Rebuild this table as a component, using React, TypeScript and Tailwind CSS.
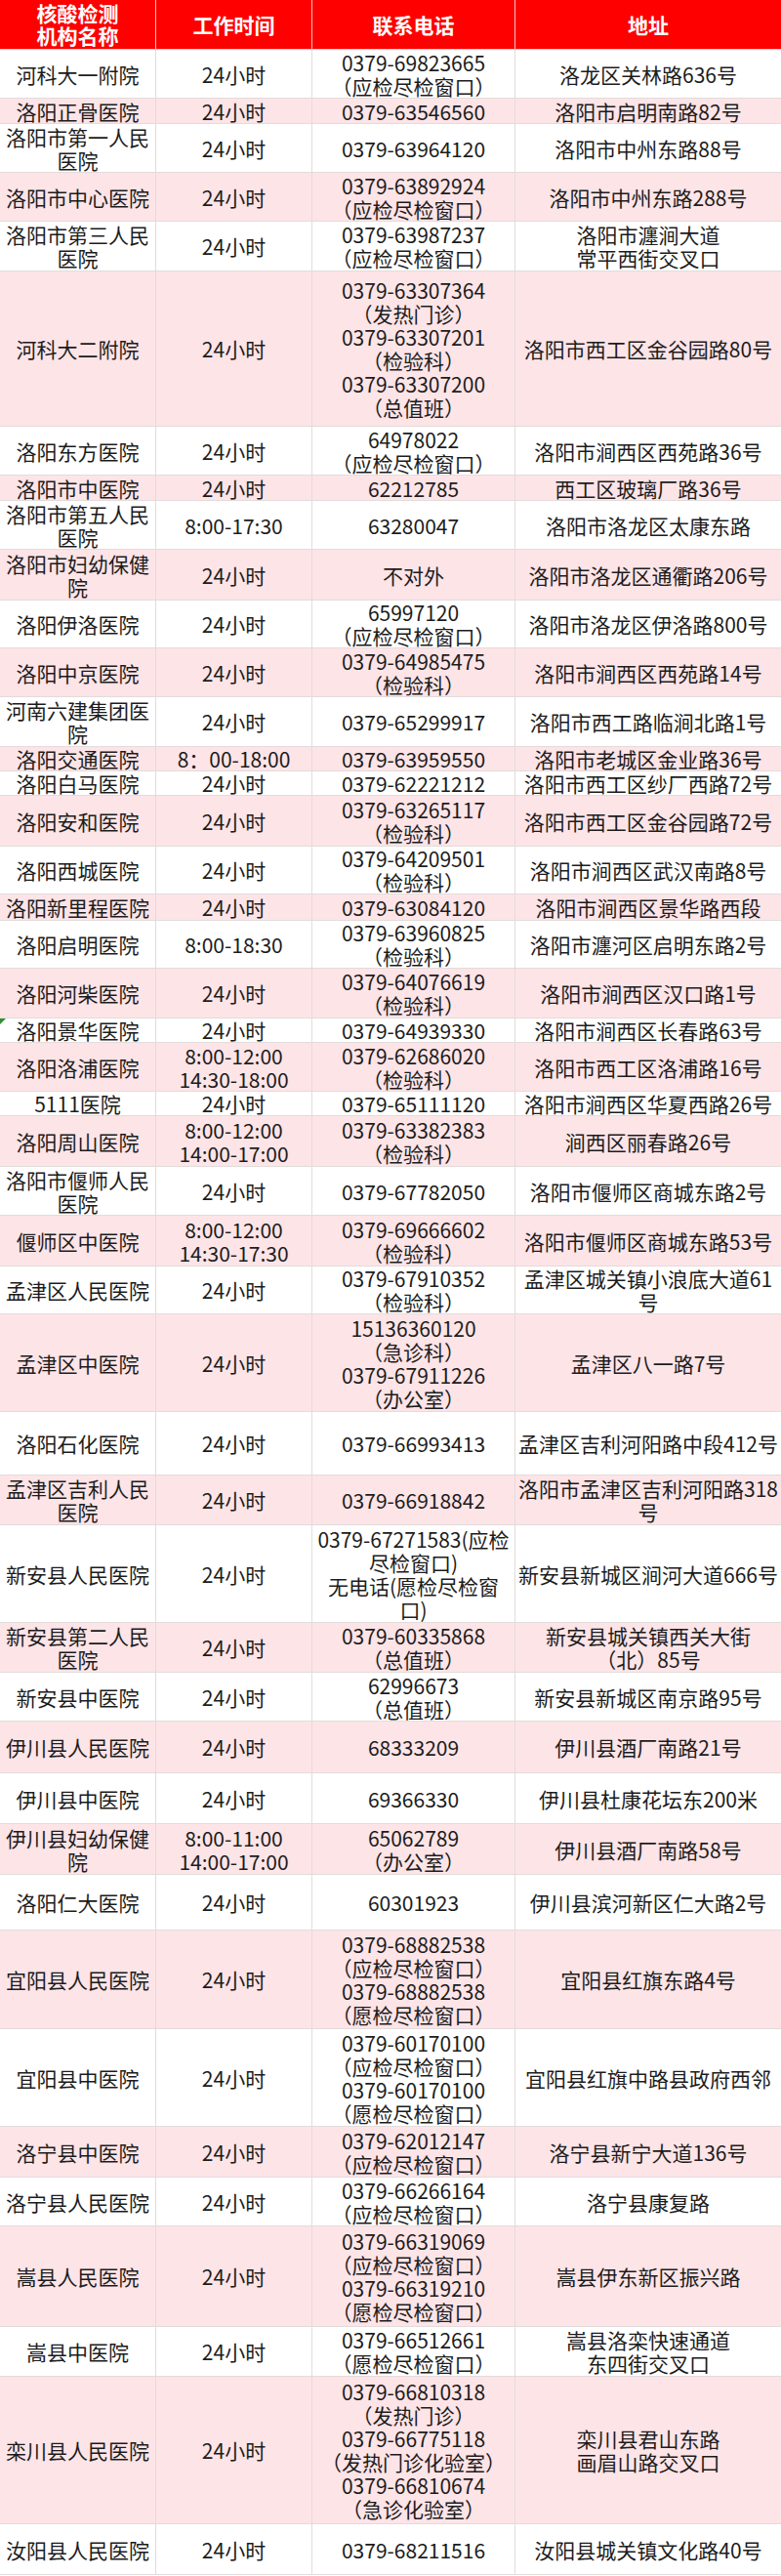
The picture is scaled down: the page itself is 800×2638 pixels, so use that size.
import React from 'react'

type Row = {
  name: string
  time: string
  phone: string
  addr: string
  h: string
  mark?: boolean
}

const rows: Row[] = [
  { name: '河科大一附院', time: '24小时', phone: '0379-69823665\n（应检尽检窗口）', addr: '洛龙区关林路636号', h: 'h-[50px]' },
  { name: '洛阳正骨医院', time: '24小时', phone: '0379-63546560', addr: '洛阳市启明南路82号', h: 'h-[26px]' },
  { name: '洛阳市第一人民\n医院', time: '24小时', phone: '0379-63964120', addr: '洛阳市中州东路88号', h: 'h-[50px]' },
  { name: '洛阳市中心医院', time: '24小时', phone: '0379-63892924\n（应检尽检窗口）', addr: '洛阳市中州东路288号', h: 'h-[50px]' },
  { name: '洛阳市第三人民\n医院', time: '24小时', phone: '0379-63987237\n（应检尽检窗口）', addr: '洛阳市瀍涧大道\n常平西街交叉口', h: 'h-[51px]' },
  { name: '河科大二附院', time: '24小时', phone: '0379-63307364\n（发热门诊）\n0379-63307201\n（检验科）\n0379-63307200\n（总值班）', addr: '洛阳市西工区金谷园路80号', h: 'h-[159px]' },
  { name: '洛阳东方医院', time: '24小时', phone: '64978022\n（应检尽检窗口）', addr: '洛阳市涧西区西苑路36号', h: 'h-[50px]' },
  { name: '洛阳市中医院', time: '24小时', phone: '62212785', addr: '西工区玻璃厂路36号', h: 'h-[26px]' },
  { name: '洛阳市第五人民\n医院', time: '8:00-17:30', phone: '63280047', addr: '洛阳市洛龙区太康东路', h: 'h-[50px]' },
  { name: '洛阳市妇幼保健\n院', time: '24小时', phone: '不对外', addr: '洛阳市洛龙区通衢路206号', h: 'h-[52px]' },
  { name: '洛阳伊洛医院', time: '24小时', phone: '65997120\n（应检尽检窗口）', addr: '洛阳市洛龙区伊洛路800号', h: 'h-[49px]' },
  { name: '洛阳中京医院', time: '24小时', phone: '0379-64985475\n（检验科）', addr: '洛阳市涧西区西苑路14号', h: 'h-[50px]' },
  { name: '河南六建集团医\n院', time: '24小时', phone: '0379-65299917', addr: '洛阳市西工路临涧北路1号', h: 'h-[51px]' },
  { name: '洛阳交通医院', time: '8：00-18:00', phone: '0379-63959550', addr: '洛阳市老城区金业路36号', h: 'h-[25px]' },
  { name: '洛阳白马医院', time: '24小时', phone: '0379-62221212', addr: '洛阳市西工区纱厂西路72号', h: 'h-[25px]' },
  { name: '洛阳安和医院', time: '24小时', phone: '0379-63265117\n（检验科）', addr: '洛阳市西工区金谷园路72号', h: 'h-[52px]' },
  { name: '洛阳西城医院', time: '24小时', phone: '0379-64209501\n（检验科）', addr: '洛阳市涧西区武汉南路8号', h: 'h-[49px]' },
  { name: '洛阳新里程医院', time: '24小时', phone: '0379-63084120', addr: '洛阳市涧西区景华路西段', h: 'h-[27px]' },
  { name: '洛阳启明医院', time: '8:00-18:30', phone: '0379-63960825\n（检验科）', addr: '洛阳市瀍河区启明东路2号', h: 'h-[49px]' },
  { name: '洛阳河柴医院', time: '24小时', phone: '0379-64076619\n（检验科）', addr: '洛阳市涧西区汉口路1号', h: 'h-[51px]' },
  { name: '洛阳景华医院', time: '24小时', phone: '0379-64939330', addr: '洛阳市涧西区长春路63号', h: 'h-[25px]', mark: true },
  { name: '洛阳洛浦医院', time: '8:00-12:00\n14:30-18:00', phone: '0379-62686020\n（检验科）', addr: '洛阳市西工区洛浦路16号', h: 'h-[50px]' },
  { name: '5111医院', time: '24小时', phone: '0379-65111120', addr: '洛阳市涧西区华夏西路26号', h: 'h-[25px]' },
  { name: '洛阳周山医院', time: '8:00-12:00\n14:00-17:00', phone: '0379-63382383\n（检验科）', addr: '涧西区丽春路26号', h: 'h-[52px]' },
  { name: '洛阳市偃师人民\n医院', time: '24小时', phone: '0379-67782050', addr: '洛阳市偃师区商城东路2号', h: 'h-[50px]' },
  { name: '偃师区中医院', time: '8:00-12:00\n14:30-17:30', phone: '0379-69666602\n（检验科）', addr: '洛阳市偃师区商城东路53号', h: 'h-[52px]' },
  { name: '孟津区人民医院', time: '24小时', phone: '0379-67910352\n（检验科）', addr: '孟津区城关镇小浪底大道61\n号', h: 'h-[49px]' },
  { name: '孟津区中医院', time: '24小时', phone: '15136360120\n（急诊科）\n0379-67911226\n（办公室）', addr: '孟津区八一路7号', h: 'h-[100px]' },
  { name: '洛阳石化医院', time: '24小时', phone: '0379-66993413', addr: '孟津区吉利河阳路中段412号', h: 'h-[65px]' },
  { name: '孟津区吉利人民\n医院', time: '24小时', phone: '0379-66918842', addr: '洛阳市孟津区吉利河阳路318\n号', h: 'h-[51px]' },
  { name: '新安县人民医院', time: '24小时', phone: '0379-67271583(应检\n尽检窗口)\n无电话(愿检尽检窗\n口)', addr: '新安县新城区涧河大道666号', h: 'h-[100px]' },
  { name: '新安县第二人民\n医院', time: '24小时', phone: '0379-60335868\n（总值班）', addr: '新安县城关镇西关大街\n（北）85号', h: 'h-[51px]' },
  { name: '新安县中医院', time: '24小时', phone: '62996673\n（总值班）', addr: '新安县新城区南京路95号', h: 'h-[50px]' },
  { name: '伊川县人民医院', time: '24小时', phone: '68333209', addr: '伊川县酒厂南路21号', h: 'h-[53px]' },
  { name: '伊川县中医院', time: '24小时', phone: '69366330', addr: '伊川县杜康花坛东200米', h: 'h-[52px]' },
  { name: '伊川县妇幼保健\n院', time: '8:00-11:00\n14:00-17:00', phone: '65062789\n（办公室）', addr: '伊川县酒厂南路58号', h: 'h-[52px]' },
  { name: '洛阳仁大医院', time: '24小时', phone: '60301923', addr: '伊川县滨河新区仁大路2号', h: 'h-[57px]' },
  { name: '宜阳县人民医院', time: '24小时', phone: '0379-68882538\n（应检尽检窗口）\n0379-68882538\n（愿检尽检窗口）', addr: '宜阳县红旗东路4号', h: 'h-[101px]' },
  { name: '宜阳县中医院', time: '24小时', phone: '0379-60170100\n（应检尽检窗口）\n0379-60170100\n（愿检尽检窗口）', addr: '宜阳县红旗中路县政府西邻', h: 'h-[100px]' },
  { name: '洛宁县中医院', time: '24小时', phone: '0379-62012147\n（应检尽检窗口）', addr: '洛宁县新宁大道136号', h: 'h-[52px]' },
  { name: '洛宁县人民医院', time: '24小时', phone: '0379-66266164\n（应检尽检窗口）', addr: '洛宁县康复路', h: 'h-[50px]' },
  { name: '嵩县人民医院', time: '24小时', phone: '0379-66319069\n（应检尽检窗口）\n0379-66319210\n（愿检尽检窗口）', addr: '嵩县伊东新区振兴路', h: 'h-[103px]' },
  { name: '嵩县中医院', time: '24小时', phone: '0379-66512661\n（愿检尽检窗口）', addr: '嵩县洛栾快速通道\n东四街交叉口', h: 'h-[51px]' },
  { name: '栾川县人民医院', time: '24小时', phone: '0379-66810318\n（发热门诊）\n0379-66775118\n（发热门诊化验室）\n0379-66810674\n（急诊化验室）', addr: '栾川县君山东路\n画眉山路交叉口', h: 'h-[151px]' },
  { name: '汝阳县人民医院', time: '24小时', phone: '0379-68211516', addr: '汝阳县城关镇文化路40号', h: 'h-[52px]' },
]

const cell = 'flex items-center justify-center text-center whitespace-pre border-r border-[#e2dcdc] last:border-r-0'

export default function App() {
  return (
    <div className="w-[800px] bg-white text-[#1c1c1c] text-[21px] leading-[24px] [font-family:'Noto_Sans_CJK_SC','Noto_Sans',sans-serif]">
      {/* header */}
      <div className="grid grid-cols-[160px_160px_208px_272px] h-[51px] bg-[#fe0000] text-white font-bold border-b border-[#e8caca]">
        <div className="flex items-center justify-center text-center whitespace-pre leading-[23px] border-r border-[#f3c4c4]">
          {'核酸检测\n机构名称'}
        </div>
        <div className="flex items-center justify-center border-r border-[#f3c4c4]">工作时间</div>
        <div className="flex items-center justify-center border-r border-[#f3c4c4]">联系电话</div>
        <div className="flex items-center justify-center">地址</div>
      </div>

      {rows.map((r, i) => (
        <div
          key={i}
          className={`grid grid-cols-[160px_160px_208px_272px] border-b border-[#e2dcdc] ${r.h} ${
            i % 2 === 1 ? 'bg-[#fde4e7]' : 'bg-white'
          }`}
        >
          <div className={`${cell} relative`}>
            {r.mark && (
              <span className="absolute left-0 top-0 w-0 h-0 border-t-[6px] border-t-[#2f8f2f] border-r-[6px] border-r-transparent" />
            )}
            {r.name}
          </div>
          <div className={cell}>{r.time}</div>
          <div className={cell}>{r.phone}</div>
          <div className={cell}>{r.addr}</div>
        </div>
      ))}
    </div>
  )
}
